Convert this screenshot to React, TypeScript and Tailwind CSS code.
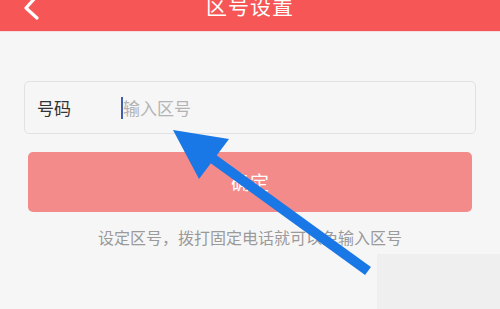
export default function App() {
  return (
    <div className="relative w-[500px] h-[309px] overflow-hidden bg-[#f6f6f6] font-['Noto_Sans_CJK_SC','Noto_Sans',sans-serif]">
      <header className="relative h-[32px] bg-[#f65656] flex justify-center border-b border-[#f2dede]">
        <svg className="absolute left-[22px] top-0" width="22" height="22" viewBox="0 0 22 22">
          <polyline points="13,-2 4,8 15,18" fill="none" stroke="#fff" strokeWidth="3.2" strokeLinecap="round" strokeLinejoin="round" />
        </svg>
        <h1 className="-mt-[5px] text-[21px] leading-[21px] tracking-[1px] text-white">区号设置</h1>
      </header>

      <div className="mt-[49px] mx-[24px] h-[53px] rounded-[5px] border border-[#e2e2e2] flex items-center">
        <span className="ml-[12px] w-[84px] text-[17px] text-[#333]">号码</span>
        <div className="flex items-center">
          <span className="w-[2px] h-[22px] bg-[#3d5fae]" />
          <span className="text-[17px] text-[#b3b3b3]">输入区号</span>
        </div>
      </div>

      <button className="mt-[18px] mx-[28px] w-[444px] h-[60px] rounded-[5px] bg-[#f38b8b] text-white text-[19px] flex items-center justify-center">
        确定
      </button>

      <p className="mt-[15px] text-center text-[16px] leading-[20px] text-[#9a9a9a]">
        设定区号，拨打固定电话就可以免输入区号
      </p>

      <div className="absolute right-0 bottom-0 w-[123px] h-[55px] bg-[#efefef]" />

      <svg className="absolute inset-0 pointer-events-none" width="500" height="309" viewBox="0 0 500 309">
        <line x1="368" y1="271" x2="205" y2="153" stroke="#1a78e6" strokeWidth="10" strokeLinecap="butt" />
        <polygon points="173,130 229,139 199,179" fill="#1a78e6" />
      </svg>
    </div>
  )
}
